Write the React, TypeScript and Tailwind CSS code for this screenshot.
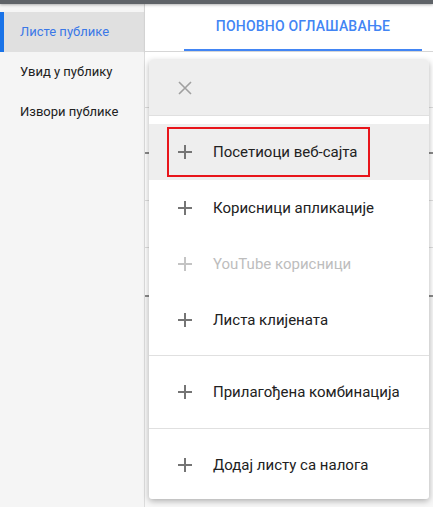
import React from "react";

const font = { fontFamily: "Roboto, 'Noto Sans', sans-serif" };

function PlusIcon({ disabled }: { disabled?: boolean }) {
  return (
    <svg width="14" height="14" viewBox="0 0 14 14" className={disabled ? "text-[#c4c4c4]" : "text-[#757575]"}>
      <path d="M7 0v14M0 7h14" stroke="currentColor" strokeWidth="2" />
    </svg>
  );
}

function MenuRow({ label, disabled, active }: { label: string; disabled?: boolean; active?: boolean }) {
  return (
    <div className={`relative flex h-14 shrink-0 items-center gap-[21px] pl-[29px] ${active ? "bg-[#eeeeee]" : ""}`}>
      <PlusIcon disabled={disabled} />
      <span className={`text-[15px] ${disabled ? "text-[#bdbdbd]" : "text-[#212121]"}`}>{label}</span>
      {active && (
        <div className="absolute left-[18px] top-[3px] h-[50px] w-[203px] border-2 border-[#e8141a]" />
      )}
    </div>
  );
}

export default function App() {
  const bgLines = [
    { h: 56, dark: false },
    { h: 46, dark: true },
    { h: 47, dark: false },
    { h: 47, dark: false },
    { h: 49, dark: true },
  ];

  return (
    <div className="relative flex h-[507px] w-[433px] flex-col overflow-hidden bg-white" style={font}>
      <div className="z-10 h-1 w-full bg-[#5f6368] shadow-[0_1px_3px_rgba(0,0,0,0.3)]" />
      <div className="flex flex-1">
        {/* Sidebar */}
        <div className="w-[145px] shrink-0 border-r border-[#dcdcdc] bg-[#f5f5f5] pt-2">
          <div className="flex h-10 items-center border-l-4 border-[#1a73e8] bg-[#e0e0e0] pl-4 text-[13px] text-[#3b78e7]">
            Листе публике
          </div>
          <div className="flex h-10 items-center pl-5 text-[13px] text-[#212121]">Увид у публику</div>
          <div className="flex h-10 items-center pl-5 text-[13px] text-[#212121]">Извори публике</div>
        </div>

        {/* Main */}
        <div className="flex flex-1 flex-col bg-[#f7f7f7]">
          <div className="flex h-[48px] border-b border-[#d6d6d6] bg-white pl-[39px] shadow-[0_1px_2px_rgba(0,0,0,0.12)]">
            <div className="flex w-[238px] flex-col">
              <div className="flex flex-1 items-center justify-center text-[14px] font-medium tracking-[0.2px] text-[#4285f4]">
                ПОНОВНО ОГЛАШАВАЊЕ
              </div>
              <div className="h-[2px] bg-[#4285f4]" />
            </div>
          </div>
          <div className="flex flex-col">
            {bgLines.map((l, i) => (
              <div
                key={i}
                style={{ height: l.h }}
                className={`border-b ${l.dark ? "border-b-2 border-[#8a8a8a]" : "border-[#dedede]"} bg-white`}
              />
            ))}
          </div>
        </div>
      </div>

      {/* Dropdown menu */}
      <div className="absolute left-[149px] top-[60px] flex w-[280px] flex-col overflow-hidden rounded-[3px] bg-white shadow-[0_2px_6px_rgba(0,0,0,0.3)]">
        <div className="flex h-14 shrink-0 items-center border-b border-[#e0e0e0] bg-[#eeeeee] pl-[29px]">
          <svg width="14" height="14" viewBox="0 0 14 14" className="text-[#a0a0a0]">
            <path d="M1 1l12 12M13 1L1 13" stroke="currentColor" strokeWidth="1.6" />
          </svg>
        </div>
        <div className="pt-2">
          <MenuRow label="Посетиоци веб-сајта" active />
          <MenuRow label="Корисници апликације" />
          <MenuRow label="YouTube корисници" disabled />
          <MenuRow label="Листа клијената" />
        </div>
        <div className="mt-[7px] border-t border-[#e0e0e0] py-2">
          <MenuRow label="Прилагођена комбинација" />
        </div>
        <div className="border-t border-[#e0e0e0] pt-2 pb-1.5">
          <MenuRow label="Додај листу са налога" />
        </div>
      </div>
    </div>
  );
}
